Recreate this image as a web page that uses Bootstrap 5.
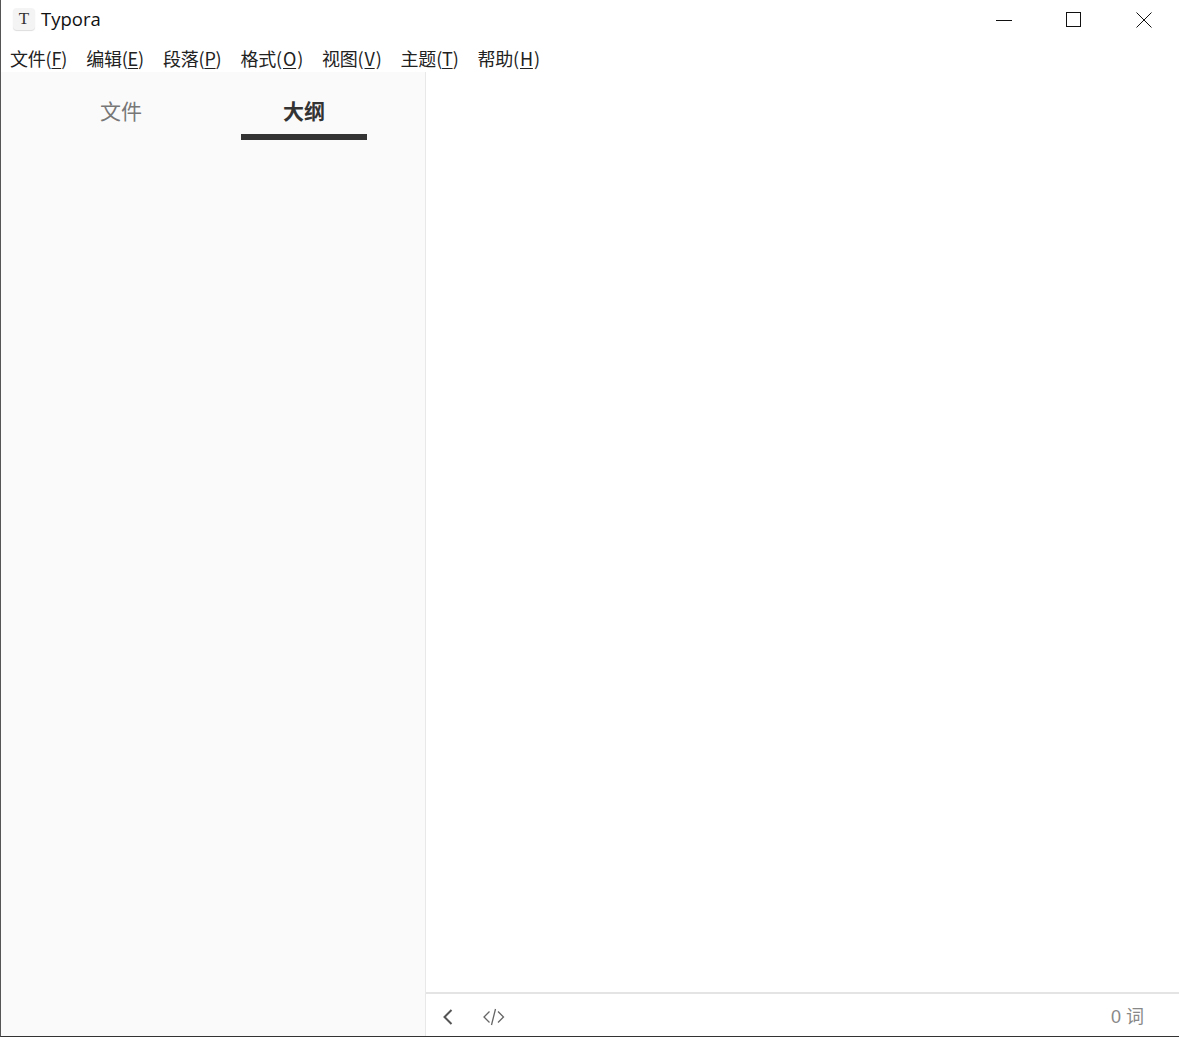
<!DOCTYPE html>
<html>
<head>
    <title>Typora</title>
    <meta charset="utf-8">
    <link href="https://cdn.jsdelivr.net/npm/bootstrap@5.3.0/dist/css/bootstrap.min.css" rel="stylesheet">
    <style>
    html, body { height: 100%; overflow: hidden; background: #fff; }
    body { font-family: "Liberation Sans", "Noto Sans CJK SC", sans-serif; }
    .app-frame { height: 1037px; border-left: 1px solid #555; border-bottom: 1px solid #333; }
    .title-bar { height: 38px; }
    .app-logo { width: 22px; height: 22px; margin-left: 12px; background: #f4f4f4; border-radius: 4px; box-shadow: 0 1px 1px #ddd; font: 17px/22px "Liberation Serif", serif; color: #333; text-align: center; }
    .app-name { margin-left: 6px; font: 18.5px/22px "Open Sans", "Liberation Sans", sans-serif; color: #111; }
    .win-btn { width: 70px; height: 38px; padding-top: 2px; }
    .menu-bar { height: 34px; padding-left: 9px; padding-top: 5px; gap: 19px; font-size: 18px; line-height: 24px; color: #222; font-family: "Noto Sans CJK SC", sans-serif; letter-spacing: -.2px; }
    .menu-bar u { text-underline-offset: 2px; text-decoration-thickness: 1px; }
    .menu-bar u.key-wide { padding: 0 1px; }
    .side-pane { width: 424px; background: #fafafa; }
    .side-tab { width: 126px; height: 68px; font-size: 21px; font-family: "Noto Sans CJK SC", sans-serif; color: #777; padding-top: 23px; line-height: 30px; }
    .side-tab.on { color: #333; font-weight: 700; border-bottom: 6px solid #333; }
    .side-tabs { padding-left: 57px; gap: 57px; }
    .main-pane { border-left: 1px solid #e8e8e8; }
    .status-bar { height: 44px; border-top: 2px solid #e4e4e4; padding-top: 3px; color: #777; }
    .back-icon { margin-left: 16px; }
    .code-icon { margin-left: 27px; }
    .word-count { font-size: 18px; line-height: 24px; margin-right: 35px; font-family: "Liberation Sans", "Noto Sans CJK SC", sans-serif; color: #888; }
    </style>
</head>
<body>
<div class="app-frame d-flex flex-column">
    <div class="title-bar d-flex align-items-center flex-shrink-0">
        <div class="app-logo">T</div>
        <div class="app-name">Typora</div>
        <div class="ms-auto d-flex">
            <div class="win-btn d-flex align-items-center justify-content-center"><svg width="16" height="16"><path d="M0 8.5H16" stroke="#111" fill="none"/></svg></div>
            <div class="win-btn d-flex align-items-center justify-content-center"><svg width="16" height="16"><rect x=".5" y=".5" width="14" height="14" stroke="#111" fill="none"/></svg></div>
            <div class="win-btn d-flex align-items-center justify-content-center"><svg width="16" height="16"><path d="M.5 .5L15.5 15.5M15.5 .5L.5 15.5" stroke="#111" fill="none"/></svg></div>
        </div>
    </div>
    <div class="menu-bar d-flex align-items-center flex-shrink-0">
        <span>文件(<u>F</u>)</span>
        <span>编辑(<u>E</u>)</span>
        <span>段落(<u>P</u>)</span>
        <span>格式(<u class="key-wide">O</u>)</span>
        <span>视图(<u class="key-wide">V</u>)</span>
        <span>主题(<u>T</u>)</span>
        <span>帮助(<u class="key-wide">H</u>)</span>
    </div>
    <div class="d-flex flex-grow-1">
        <div class="side-pane flex-shrink-0">
            <div class="side-tabs d-flex">
                <div class="side-tab text-center">文件</div>
                <div class="side-tab on text-center">大纲</div>
            </div>
        </div>
        <div class="main-pane flex-grow-1 d-flex flex-column">
            <div class="flex-grow-1"></div>
            <div class="status-bar d-flex align-items-center">
                <svg class="back-icon" width="12" height="18" viewBox="0 0 12 18"><path d="M9.5 2L2.5 9L9.5 16" stroke="#555" stroke-width="2" fill="none"/></svg>
                <svg class="code-icon" width="24" height="18" viewBox="0 0 24 18"><path d="M8.5 3.5L3 9L8.5 14.5M17 3.5L22.5 9L17 14.5M14.5 1L10.5 17" stroke="#666" stroke-width="1.3" fill="none"/></svg>
                <div class="word-count ms-auto">0 词</div>
            </div>
        </div>
    </div>
</div>
<script src="https://cdn.jsdelivr.net/npm/bootstrap@5.3.0/dist/js/bootstrap.bundle.min.js"></script>
</body>
</html>
